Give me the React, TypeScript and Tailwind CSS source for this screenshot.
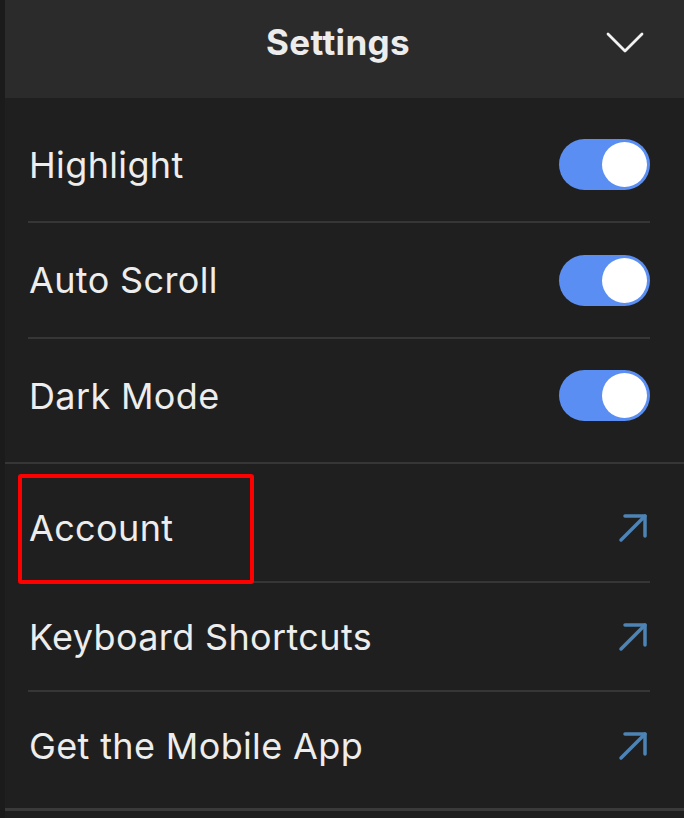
import React from 'react';

const font = {fontFamily: 'Inter, "Noto Sans", sans-serif'};

const Toggle = ({on}: {on: boolean}) => (
    <div className={`w-[91px] h-[51px] rounded-full p-[3px] flex items-center ${on ? 'bg-[#5b8ef2] justify-end' : 'bg-[#3a3a3a] justify-start'}`}>
        <div className="w-[45px] h-[45px] rounded-full bg-white"/>
    </div>
);

const ArrowIcon = () => (
    <svg width="30" height="30" viewBox="0 0 30 30" fill="none" stroke="#4d84b5" strokeWidth="3.5"
         strokeLinecap="round" strokeLinejoin="round">
        <path d="M3 27 L27 3"/>
        <path d="M7 3 H27 V23"/>
    </svg>
);

const Divider = () => <div className="h-[2px] bg-[#363636] ml-[23px] mr-[34px]"/>;

export default function App() {
    const [toggles, setToggles] = React.useState({highlight: true, scroll: true, dark: true});
    const links = [
        {label: 'Account', h: 'h-[107px]'},
        {label: 'Keyboard Shortcuts', h: 'h-[107px]'},
        {label: 'Get the Mobile App', h: 'h-[107px]'},
    ];
    const rows: { key: keyof typeof toggles; label: string; h: string }[] = [
        {key: 'highlight', label: 'Highlight', h: 'h-[113px]'},
        {key: 'scroll', label: 'Auto Scroll', h: 'h-[114px]'},
        {key: 'dark', label: 'Dark Mode', h: 'h-[113px]'},
    ];

    return (
        <div className="w-[684px] h-[818px] bg-[#1b1b1b] flex overflow-hidden relative" style={font}>
            <div className="ml-[5px] flex-1 bg-[#1f1f1f] flex flex-col">
                <header className="h-[98px] bg-[#2b2b2b] relative flex items-center justify-center">
                    <h1 className="text-[35px] font-bold text-[#ececec] tracking-[0.01em] mr-[13px] -mt-[14px]">Settings</h1>
                    <button className="absolute right-[40px] top-[31px]" aria-label="Collapse">
                        <svg width="38" height="22" viewBox="0 0 38 22" fill="none" stroke="#f2f2f2" strokeWidth="2.8"
                             strokeLinecap="round" strokeLinejoin="round">
                            <path d="M2 3 L19 20 L36 3"/>
                        </svg>
                    </button>
                </header>

                <section className="py-[10px]">
                    {rows.map((r, i) => (
                        <React.Fragment key={r.key}>
                            <div className={`${r.h} flex items-center justify-between pl-[24px] pr-[34px]`}>
                                <span className="text-[36px] text-[#ededed] tracking-[0.01em]">{r.label}</span>
                                <button onClick={() => setToggles(t => ({...t, [r.key]: !t[r.key]}))}>
                                    <Toggle on={toggles[r.key]}/>
                                </button>
                            </div>
                            {i < rows.length - 1 && <Divider/>}
                        </React.Fragment>
                    ))}
                </section>

                <div className="h-[2px] bg-[#363636]"/>

                <section className="pt-[10px] pb-[9px]">
                    {links.map((l, i) => (
                        <React.Fragment key={l.label}>
                            <a href="#" className={`${l.h} flex items-center justify-between pl-[24px] pr-[36px]`}>
                                <span className="text-[36px] text-[#ededed] tracking-[0.01em]">{l.label}</span>
                                <ArrowIcon/>
                            </a>
                            {i < links.length - 1 && <Divider/>}
                        </React.Fragment>
                    ))}
                </section>

                <div className="h-[3px] bg-[#3a3a3a]"/>
            </div>

            <div className="absolute left-[18px] top-[474px] w-[236px] h-[110px] border-[4px] border-[#ff0000] rounded-[3px]"/>
        </div>
    );
}
